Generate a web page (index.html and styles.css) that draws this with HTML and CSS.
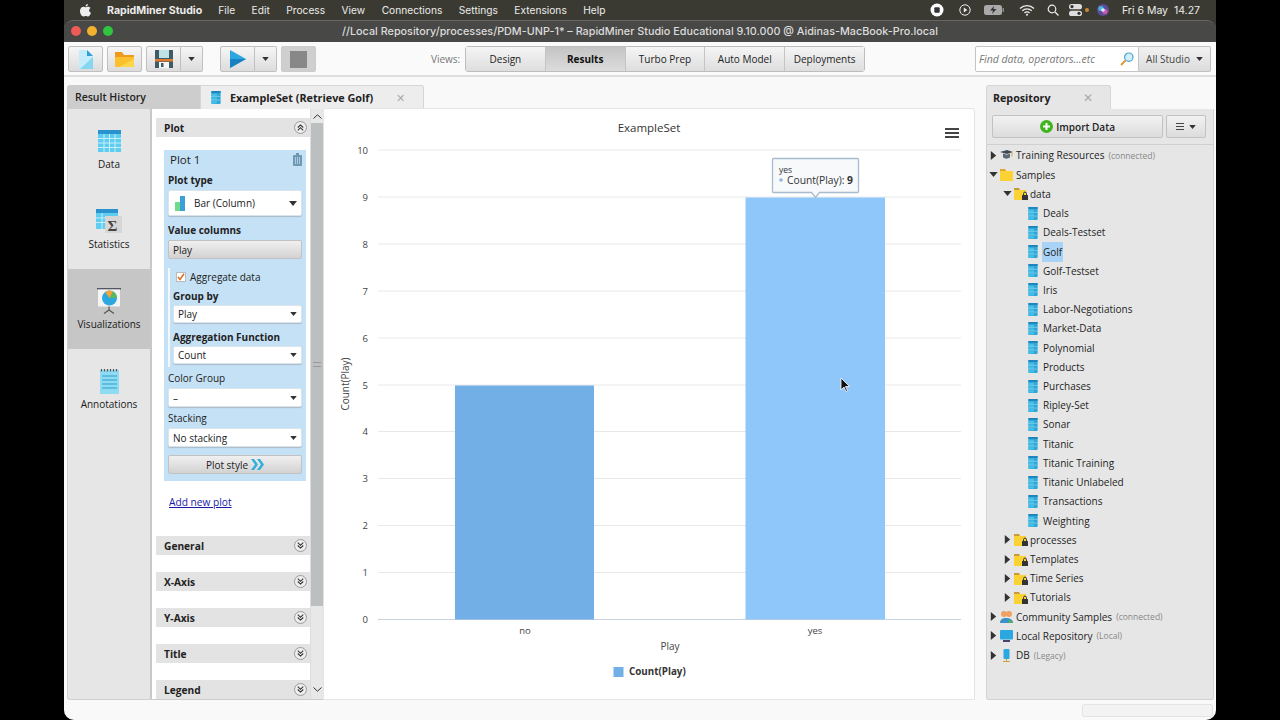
FILE: index.html
```html
<!DOCTYPE html>
<html lang="en">
<head>
<meta charset="utf-8">
<title>RapidMiner Studio</title>
<link rel="stylesheet" href="styles.css">
</head>
<body>
<svg class="defs" width="0" height="0" aria-hidden="true">
  <symbol id="db" viewBox="0 0 10 14">
    <rect x="0" y="0" width="10" height="14" rx="1" fill="#2fa6d8"/>
    <rect x="0" y="0" width="10" height="2" fill="#1f84bb"/>
    <rect x="0" y="3" width="6" height="2.500" fill="#45c0e8"/>
    <rect x="0" y="7" width="6" height="2.500" fill="#45c0e8"/>
    <rect x="0" y="11" width="6" height="2.500" fill="#45c0e8"/>
    <path d="M0 5.800h10M0 9.800h10" stroke="#a8e2f2" stroke-width=".6"/>
  </symbol>
  <symbol id="folder" viewBox="0 0 13 13">
    <path d="M0 1h5l1 2h7v10H0z" fill="#fbd233"/>
    <path d="M0 1h5l1 2H0z" fill="#e5a526"/>
  </symbol>
  <symbol id="flock" viewBox="0 0 14 13">
    <path d="M0 1h5l1 2h6v10H0z" fill="#fbd233"/>
    <path d="M0 1h5l1 2H0z" fill="#c99a3a"/>
    <rect x="8" y="8" width="6" height="5" rx=".5" fill="#333"/>
    <path d="M9.5 8V6.6a1.5 1.5 0 0 1 3 0V8" fill="none" stroke="#333" stroke-width="1"/>
  </symbol>
  <symbol id="arr-r" viewBox="0 0 6 10"><path d="M0 0l6 5-6 5z" fill="#333"/></symbol>
  <symbol id="arr-d" viewBox="0 0 10 6"><path d="M0 0h10L5 6z" fill="#333"/></symbol>
  <symbol id="dbl-up" viewBox="0 0 13 13"><circle cx="6.500" cy="6.500" r="6" fill="#eee" stroke="#888" stroke-width=".8"/><path d="M3.800 6.500L6.500 3.900l2.700 2.600M3.800 9.300l2.700-2.600 2.700 2.600" fill="none" stroke="#333" stroke-width="1.100"/></symbol>
  <symbol id="dbl-down" viewBox="0 0 13 13"><circle cx="6.500" cy="6.500" r="6" fill="#eee" stroke="#888" stroke-width=".8"/><path d="M3.800 3.700l2.700 2.600 2.700-2.600M3.800 6.500l2.700 2.600 2.700-2.600" fill="none" stroke="#333" stroke-width="1.100"/></symbol>
</svg>
<div class="window">
  <header class="menubar">
    <svg class="apple" width="11" height="13" viewBox="0 0 11 13"><path d="M8 0c.1 1-.9 2.700-2.500 2.600C5.400 1.300 6.600.1 8 0zM5.500 3.300c.6 0 1.400-.6 2.500-.6 1 0 2 .5 2.500 1.300-2 1.200-1.700 3.900.5 4.800-.5 1.500-1.700 3.800-3 3.800-.8 0-1.200-.5-2.200-.5s-1.500.5-2.200.5C1.700 12.600 0 9.600 0 7.100 0 4.400 1.700 2.800 3.300 2.800c.9 0 1.700.5 2.200.5z" fill="#eee"/></svg>
    <strong class="appname">RapidMiner Studio</strong>
    <nav class="menus"><span>File</span><span>Edit</span><span>Process</span><span>View</span><span>Connections</span><span>Settings</span><span>Extensions</span><span>Help</span></nav>
    <div class="status-icons">
      <svg width="14" height="14" viewBox="0 0 14 14"><circle cx="7" cy="7" r="6.500" fill="#fff"/><rect x="4.300" y="4.300" width="5.400" height="5.400" rx="1" fill="#333"/></svg>
      <svg class="s1" width="12" height="12" viewBox="0 0 12 12"><circle cx="6" cy="6" r="5.200" fill="none" stroke="#eee" stroke-width="1"/><path d="M4.800 3.600L8.300 6 4.800 8.400z" fill="#eee"/></svg>
      <svg class="s2" width="20" height="10" viewBox="0 0 20 10"><rect x="0" y="0" width="18" height="10" rx="2.500" fill="#aaa"/><path d="M10 1L6 5.500h3L8 9l4.500-5H9.500z" fill="#333"/><rect x="18.500" y="3" width="1.500" height="4" fill="#888"/></svg>
      <svg class="s3" width="16" height="12" viewBox="0 0 16 12"><path d="M1 4.500a10 10 0 0 1 14 0M3.300 6.800a6.700 6.700 0 0 1 9.400 0M5.500 9a3.500 3.500 0 0 1 5 0" fill="none" stroke="#eee" stroke-width="1.300"/><circle cx="8" cy="10.800" r="1" fill="#eee"/></svg>
      <svg class="s4" width="12" height="12" viewBox="0 0 12 12"><circle cx="5" cy="5" r="3.800" fill="none" stroke="#eee" stroke-width="1.200"/><path d="M8 8l3.500 3.500" stroke="#eee" stroke-width="1.300"/></svg>
      <svg class="s5" width="13" height="12" viewBox="0 0 13 12"><rect x="0" y="0" width="13" height="5.300" rx="2.600" fill="#ddd"/><rect x="0" y="6.700" width="13" height="5.300" rx="2.600" fill="#ddd"/><circle cx="3" cy="2.600" r="1.600" fill="#333"/><circle cx="10" cy="9.300" r="1.600" fill="#333"/></svg>
      <i class="dot"></i>
      <svg class="s6" width="12" height="12" viewBox="0 0 12 12"><circle cx="6" cy="6" r="6" fill="#5b4b9c"/><circle cx="4" cy="4.500" r="2.600" fill="#49b6d8"/><circle cx="8" cy="7.500" r="2.600" fill="#c75aa8"/><circle cx="6" cy="6" r="1.800" fill="#dfe8f5"/></svg>
    </div>
    <span class="clock">Fri 6 May&nbsp; 14.27</span>
  </header>

  <div class="titlebar">
    <div class="lights"><i class="red"></i><i class="yellow"></i><i class="green"></i></div>
    <span class="wintitle">//Local Repository/processes/PDM-UNP-1* – RapidMiner Studio Educational 9.10.000 @ Aidinas-MacBook-Pro.local</span>
  </div>

  <div class="toolbar">
    <button class="tb"><svg width="14" height="19" viewBox="0 0 14 19"><path d="M0 0h8l6 6v13H0z" fill="#c4ecfa"/><path d="M8 0l6 6H8z" fill="#2f9fd6"/><path d="M14 7v12H1z" fill="#86d6f2"/></svg></button>
    <button class="tb"><svg width="19" height="15" viewBox="0 0 19 15"><path d="M0 0h7l2 3h10v12H0z" fill="#ee9a1c"/><path d="M0 5h19v10H0z" fill="#fbc02d"/><path d="M19 7v8H4z" fill="#fdd64a"/></svg></button>
    <div class="split save">
      <button class="tb"><svg width="18" height="18" viewBox="0 0 18 18"><rect width="18" height="18" fill="#3f5b68"/><rect x="4" y="0" width="10" height="8" fill="#bfe2e6"/><rect x="0" y="9" width="18" height="2.500" fill="#e07b32"/><rect x="4" y="12" width="10" height="6" fill="#f6f6f6"/><rect x="6" y="13" width="2.500" height="4" fill="#3f5b68"/></svg></button>
      <button class="tb caret"><svg width="7" height="4" viewBox="0 0 10 6"><use href="#arr-d"/></svg></button>
    </div>
    <div class="split run">
      <button class="tb"><svg width="16" height="18" viewBox="0 0 16 18"><path d="M0 0l16 9L0 18z" fill="#2aa7e0"/><path d="M0 9h16L0 18z" fill="#1980c2"/></svg></button>
      <button class="tb caret"><svg width="7" height="4" viewBox="0 0 10 6"><use href="#arr-d"/></svg></button>
    </div>
    <button class="tb stop"><span class="stopsq"></span></button>
    <span class="views-label">Views:</span>
    <div class="views">
      <button>Design</button><button class="on">Results</button><button>Turbo Prep</button><button>Auto Model</button><button>Deployments</button>
    </div>
    <div class="search">
      <span class="search-ph">Find data, operators...etc</span>
      <svg width="14" height="14" viewBox="0 0 14 14"><circle cx="8.800" cy="5.200" r="4.200" fill="#d3eefa" stroke="#4aa5cc" stroke-width="1.200"/><path d="M5.600 8.400L1 13" stroke="#d99a32" stroke-width="2"/></svg>
    </div>
    <button class="allstudio">All Studio <svg width="7" height="4" viewBox="0 0 10 6"><use href="#arr-d"/></svg></button>
  </div>

  <main class="main">
    <section class="left">
      <div class="tabs">
        <div class="tab-hist">Result History</div>
        <div class="tab-active">
          <svg width="10" height="13"><use href="#db"/></svg>
          <span>ExampleSet (Retrieve Golf)</span>
          <b class="x">✕</b>
        </div>
      </div>
      <div class="leftbody">
        <aside class="sidetabs">
          <div class="stab">
            <div class="stab-ico"><svg width="23" height="22" viewBox="0 0 23 22"><rect width="23" height="22" fill="#5fcdf0"/><rect width="23" height="4" fill="#2a92cc"/><path d="M0 8.500h23M0 13h23M0 17.500h23M6 4v18M11.500 4v18M17 4v18" stroke="#c5effa" stroke-width="1"/></svg></div>
            <span>Data</span>
          </div>
          <div class="stab">
            <div class="stab-ico"><svg width="26" height="24" viewBox="0 0 26 24"><rect width="22" height="20" fill="#5fcdf0"/><rect width="22" height="4" fill="#2a92cc"/><path d="M0 9h22M0 13.500h22M6 4v16" stroke="#c5effa"/><rect x="9" y="7" width="17" height="17" fill="#d6d6d6"/><text x="11.500" y="22" class="sigma">Σ</text></svg></div>
            <span>Statistics</span>
          </div>
          <div class="stab on">
            <div class="stab-ico"><svg width="24" height="26" viewBox="0 0 24 26"><rect x="0" y="0" width="24" height="1.500" fill="#556"/><rect x="1" y="1.500" width="22" height="17" fill="#f4f4f4"/><circle cx="12.500" cy="10" r="7.500" fill="#2da7df"/><path d="M12.500 10L16 3.400a7.500 7.500 0 0 1 4 6.600z" fill="#5cb85c"/><path d="M12.500 10L8 4a7.500 7.500 0 0 1 8-.6z" fill="#f0a63a"/><path d="M12 18.500v3.500M12 22l-5 3.500M12 22l5 3.500" stroke="#555" stroke-width="1.200" fill="none"/></svg></div>
            <span>Visualizations</span>
          </div>
          <div class="stab">
            <div class="stab-ico"><svg width="19" height="26" viewBox="0 0 19 26"><rect y="2" width="19" height="24" fill="#8fdcf2"/><path d="M1.500 1v2.500M4.500 1v2.500M7.500 1v2.500M10.500 1v2.500M13.500 1v2.500M16.500 1v2.500" stroke="#555" stroke-width="1.200"/><path d="M2 8h15M2 12h15M2 16h15M2 20h15" stroke="#2a9fcc"/></svg></div>
            <span>Annotations</span>
          </div>
        </aside>
        <div class="config">
          <div class="acc acc-first"><span>Plot</span><svg width="13" height="13"><use href="#dbl-up"/></svg></div>
          <div class="card">
            <div class="card-head"><span>Plot 1</span><svg width="9" height="13" viewBox="0 0 9 13"><rect x="0" y="2" width="9" height="11" rx="1" fill="#6d9ab0"/><rect x="3" y="0" width="3" height="2" fill="#6d9ab0"/><path d="M2.500 4v7M4.500 4v7M6.500 4v7" stroke="#c5e1f5" stroke-width=".7"/></svg></div>
            <label class="lbl b lbl-type">Plot type</label>
            <div class="sel sel-big">
              <svg width="10" height="15" viewBox="0 0 10 15"><rect x="0" y="6" width="5" height="9" fill="#6fdc8c"/><rect x="5" y="0" width="5" height="15" fill="#3d9fd8"/></svg>
              <span>Bar (Column)</span><svg class="ar" width="8" height="5" viewBox="0 0 10 6"><use href="#arr-d"/></svg>
            </div>
            <label class="lbl b lbl-val">Value columns</label>
            <div class="greybtn left-text">Play</div>
            <div class="aggr">
              <div class="check"><span class="box"><svg width="8" height="8" viewBox="0 0 8 8"><path d="M1 4l2 2.500L7 .8" fill="none" stroke="#d8702a" stroke-width="1.600"/></svg></span><span>Aggregate data</span></div>
              <label class="lbl b lbl-group">Group by</label>
              <div class="sel sel-sm"><span>Play</span><svg class="ar" width="7" height="4" viewBox="0 0 10 6"><use href="#arr-d"/></svg></div>
              <label class="lbl b lbl-fn">Aggregation Function</label>
              <div class="sel sel-sm"><span>Count</span><svg class="ar" width="7" height="4" viewBox="0 0 10 6"><use href="#arr-d"/></svg></div>
            </div>
            <label class="lbl lbl-color">Color Group</label>
            <div class="sel sel-mid"><span>–</span><svg class="ar" width="7" height="4" viewBox="0 0 10 6"><use href="#arr-d"/></svg></div>
            <label class="lbl lbl-stack">Stacking</label>
            <div class="sel sel-mid"><span>No stacking</span><svg class="ar" width="7" height="4" viewBox="0 0 10 6"><use href="#arr-d"/></svg></div>
            <div class="greybtn style-btn">Plot style <svg width="13" height="11" viewBox="0 0 13 11"><path d="M0 0h3l4 5.500L3 11H0l4-5.500zM6 0h3l4 5.500L9 11H6l4-5.500z" fill="#2fb0dc"/></svg></div>
          </div>
          <a class="addplot">Add new plot</a>
          <div class="acc acc-general"><span>General</span><svg width="13" height="13"><use href="#dbl-down"/></svg></div>
          <div class="acc"><span>X-Axis</span><svg width="13" height="13"><use href="#dbl-down"/></svg></div>
          <div class="acc"><span>Y-Axis</span><svg width="13" height="13"><use href="#dbl-down"/></svg></div>
          <div class="acc"><span>Title</span><svg width="13" height="13"><use href="#dbl-down"/></svg></div>
          <div class="acc"><span>Legend</span><svg width="13" height="13"><use href="#dbl-down"/></svg></div>
        </div>
        <div class="vscroll">
          <svg class="up" width="9" height="5" viewBox="0 0 9 5"><path d="M.5 4.500L4.500.8l4 3.700" fill="none" stroke="#333"/></svg>
          <div class="thumb"><i></i></div>
          <svg class="down" width="9" height="5" viewBox="0 0 9 5"><path d="M.5.500l4 3.700 4-3.700" fill="none" stroke="#333"/></svg>
        </div>
        <div class="chart">
          <svg class="plot" width="652" height="592" viewBox="323 108 652 592">
            <text x="649" y="132" text-anchor="middle" class="c-title">ExampleSet</text>
            <path d="M945 129h14M945 133h14M945 137h14" stroke="#444" stroke-width="2"/>
            <path class="grid" d="M378 150h583M378 197h583M378 244h583M378 291h583M378 338h583M378 385h583M378 431.500h583M378 478.500h583M378 525.500h583M378 572.500h583"/>
            <path d="M378 619.500h583" stroke="#c8d2e0"/>
            <g class="c-num" text-anchor="end">
              <text x="368" y="154">10</text><text x="368" y="201">9</text><text x="368" y="248">8</text><text x="368" y="295">7</text><text x="368" y="342">6</text><text x="368" y="389">5</text><text x="368" y="435">4</text><text x="368" y="482">3</text><text x="368" y="529">2</text><text x="368" y="576">1</text><text x="368" y="623">0</text>
            </g>
            <rect x="455" y="385.500" width="139" height="234" fill="#72afe6"/>
            <rect x="745.500" y="197.500" width="139.500" height="422" fill="#90c7fb"/>
            <text x="525" y="634" text-anchor="middle" class="c-num">no</text>
            <text x="815" y="634" text-anchor="middle" class="c-num">yes</text>
            <text x="670" y="650" text-anchor="middle" class="c-axis">Play</text>
            <text transform="translate(349 384) rotate(-90)" text-anchor="middle" class="c-axis">Count(Play)</text>
            <rect x="613.500" y="667" width="10" height="10" fill="#72afe6"/>
            <text x="629" y="675" class="c-legend">Count(Play)</text>
            <path d="M773.500 158.500h84a1 1 0 0 1 1 1v32a1 1 0 0 1-1 1h-38l-4 5-4-5h-38a1 1 0 0 1-1-1v-32a1 1 0 0 1 1-1z" fill="#f7f9fb" stroke="#a9bccf" stroke-width="1.300"/>
            <text x="779" y="172.500" class="tip-s">yes</text>
            <circle cx="781" cy="180" r="1.800" fill="#8db4e2"/>
            <text x="787" y="183.500" class="tip">Count(Play): <tspan class="tip-b">9</tspan></text>
            <path d="M841 378v12l3-3 2 4.500 1.500-.7-2-4.300h4z" fill="#111" stroke="#fff" stroke-width=".8"/>
          </svg>
        </div>
      </div>
    </section>

    <aside class="right">
      <div class="rtab"><span>Repository</span><b class="x">✕</b></div>
      <div class="rbody">
        <div class="rtools">
          <button class="import"><svg width="13" height="13" viewBox="0 0 13 13"><circle cx="6.500" cy="6.500" r="6.500" fill="#3fb41e"/><path d="M6.500 3v7M3 6.500h7" stroke="#fff" stroke-width="2"/></svg>Import Data</button>
          <button class="rmenu"><svg width="8" height="7" viewBox="0 0 8 7"><path d="M0 .5h8M0 3.500h8M0 6.500h8" stroke="#444"/></svg><svg width="7" height="4" viewBox="0 0 10 6"><use href="#arr-d"/></svg></button>
        </div>
        <ul class="tree">
          <li class="l0"><svg class="a" width="5" height="9"><use href="#arr-r"/></svg><svg class="ic" width="13" height="10" viewBox="0 0 13 10"><path d="M0 2l7-2 6 2-6 2z" fill="#3e4a55"/><path d="M3 3.500v4c2 1.500 5 1.500 7 0v-4l-3 1.200z" fill="#5b6a78"/><path d="M12 2.500v4" stroke="#d9a93a"/></svg><span>Training Resources</span> <small>(connected)</small></li>
          <li class="l0"><svg class="a" width="9" height="5"><use href="#arr-d"/></svg><svg class="ic" width="13" height="13"><use href="#folder"/></svg><span>Samples</span></li>
          <li class="l1"><svg class="a" width="9" height="5"><use href="#arr-d"/></svg><svg class="ic" width="14" height="13"><use href="#flock"/></svg><span>data</span></li>
          <li class="l2"><svg width="10" height="13"><use href="#db"/></svg><span>Deals</span></li>
          <li class="l2"><svg width="10" height="13"><use href="#db"/></svg><span>Deals-Testset</span></li>
          <li class="l2 sel-row"><svg width="10" height="13"><use href="#db"/></svg><span>Golf</span></li>
          <li class="l2"><svg width="10" height="13"><use href="#db"/></svg><span>Golf-Testset</span></li>
          <li class="l2"><svg width="10" height="13"><use href="#db"/></svg><span>Iris</span></li>
          <li class="l2"><svg width="10" height="13"><use href="#db"/></svg><span>Labor-Negotiations</span></li>
          <li class="l2"><svg width="10" height="13"><use href="#db"/></svg><span>Market-Data</span></li>
          <li class="l2"><svg width="10" height="13"><use href="#db"/></svg><span>Polynomial</span></li>
          <li class="l2"><svg width="10" height="13"><use href="#db"/></svg><span>Products</span></li>
          <li class="l2"><svg width="10" height="13"><use href="#db"/></svg><span>Purchases</span></li>
          <li class="l2"><svg width="10" height="13"><use href="#db"/></svg><span>Ripley-Set</span></li>
          <li class="l2"><svg width="10" height="13"><use href="#db"/></svg><span>Sonar</span></li>
          <li class="l2"><svg width="10" height="13"><use href="#db"/></svg><span>Titanic</span></li>
          <li class="l2"><svg width="10" height="13"><use href="#db"/></svg><span>Titanic Training</span></li>
          <li class="l2"><svg width="10" height="13"><use href="#db"/></svg><span>Titanic Unlabeled</span></li>
          <li class="l2"><svg width="10" height="13"><use href="#db"/></svg><span>Transactions</span></li>
          <li class="l2"><svg width="10" height="13"><use href="#db"/></svg><span>Weighting</span></li>
          <li class="l1"><svg class="a" width="5" height="9"><use href="#arr-r"/></svg><svg class="ic" width="14" height="13"><use href="#flock"/></svg><span>processes</span></li>
          <li class="l1"><svg class="a" width="5" height="9"><use href="#arr-r"/></svg><svg class="ic" width="14" height="13"><use href="#flock"/></svg><span>Templates</span></li>
          <li class="l1"><svg class="a" width="5" height="9"><use href="#arr-r"/></svg><svg class="ic" width="14" height="13"><use href="#flock"/></svg><span>Time Series</span></li>
          <li class="l1"><svg class="a" width="5" height="9"><use href="#arr-r"/></svg><svg class="ic" width="14" height="13"><use href="#flock"/></svg><span>Tutorials</span></li>
          <li class="l0"><svg class="a" width="5" height="9"><use href="#arr-r"/></svg><svg class="ic" width="13" height="12" viewBox="0 0 13 12"><circle cx="4" cy="3" r="3" fill="#f0a060"/><circle cx="9" cy="3" r="3" fill="#f0a060"/><path d="M0 12c0-4 3-5 6-5s7 1 7 5z" fill="#3d8fc8"/><path d="M8 12c0-2 1-3 2-3s3 1 3 3z" fill="#4cae6a"/></svg><span>Community Samples</span> <small>(connected)</small></li>
          <li class="l0"><svg class="a" width="5" height="9"><use href="#arr-r"/></svg><svg class="ic" width="13" height="12" viewBox="0 0 13 12"><rect width="13" height="9.500" rx="1" fill="#2ba8e0"/><rect x="3" y="10" width="7" height="2" fill="#446"/></svg><span>Local Repository</span> <small>(Local)</small></li>
          <li class="l0"><svg class="a" width="5" height="9"><use href="#arr-r"/></svg><svg class="ic" width="13" height="13" viewBox="0 0 13 13"><rect x="3.500" y="0" width="6" height="10" rx="1" fill="#2ba8e0"/><path d="M6.500 10v2M3 12.500h7" stroke="#c9a33c"/></svg><span>DB</span> <small>(Legacy)</small></li>
        </ul>
      </div>
    </aside>
  </main>
  <footer class="statusbar"><div class="progress"></div></footer>
</div>
</body>
</html>
```

FILE: styles.css
```css
* { box-sizing: border-box; }
html, body { margin: 0; padding: 0; width: 1280px; height: 720px; overflow: hidden; background: #000; }
body { font-family: "Open Sans", "Liberation Sans", sans-serif; font-size: 10px; color: #222; }
.defs { position: absolute; }
button { font: inherit; color: inherit; margin: 0; padding: 0; }
ul { list-style: none; margin: 0; padding: 0; }

.window { width: 1152px; height: 720px; margin-left: 64px; display: flex; flex-direction: column; background: #3b3a32; border-radius: 0 0 10px 10px; overflow: hidden; }

.menubar { height: 20px; flex: none; display: flex; align-items: center; background: #3b3a32; color: #ececec; font-family: Inter, "Liberation Sans", sans-serif; font-size: 10.2px; padding-left: 16px; padding-right: 16px; }
.apple { flex: none; }
.appname { margin-left: 16px; font-weight: 700; font-size: 10.6px; }
.menus { display: flex; gap: 16.500px; margin-left: 16px; }
.status-icons { margin-left: auto; display: flex; align-items: center; }
.s1 { margin-left: 15px; } .s2 { margin-left: 13px; } .s3 { margin-left: 15px; } .s4 { margin-left: 12px; } .s5 { margin-left: 10px; }
.dot { width: 4px; height: 4px; border-radius: 50%; background: #c98a3a; margin-left: 3px; }
.s6 { margin-left: 8px; }
.clock { margin-left: 13px; white-space: nowrap; font-size: 10.5px; }

.titlebar { height: 22px; flex: none; background: #484846; border-radius: 9px 9px 0 0; display: flex; align-items: center; justify-content: center; position: relative; border-top: 1px solid #666; }
.lights { position: absolute; left: 7px; top: 5px; display: flex; gap: 6px; }
.lights i { width: 10px; height: 10px; border-radius: 50%; }
.red { background: #ee5a56; } .yellow { background: #f4b12e; } .green { background: #2fc53f; }
.wintitle { color: #dcdcdc; font-family: Inter, "Liberation Sans", sans-serif; font-weight: 500; font-size: 10.8px; white-space: nowrap; }

.toolbar { height: 35px; flex: none; background: #fafafa; border-bottom: 2px solid #dedede; display: flex; align-items: center; padding-left: 4px; padding-top: 1px; }
.tb { width: 35px; height: 26px; border: 1px solid #c0c0c0; border-radius: 2px; background: linear-gradient(#f6f6f6, #dcdcdc); display: flex; align-items: center; justify-content: center; }
.toolbar > .tb + .tb { margin-left: 4px; }
.split { display: flex; }
.split .tb { border-radius: 2px 0 0 2px; }
.split .caret { width: 22px; border-left: 0; border-radius: 0 2px 2px 0; }
.save { margin-left: 4px; }
.run { margin-left: 17px; }
.stop { margin-left: 4px; background: #cfcfcf; border-color: #ccc; }
.stopsq { width: 17px; height: 17px; background: #888; }
.views-label { margin-left: 115px; color: #777; width: 34px; }
.views { display: flex; border: 1px solid #bdbdbd; border-radius: 3px; height: 26px; width: 400px; }
.views button { flex: 1; border: 0; border-right: 1px solid #c4c4c4; background: linear-gradient(#f5f5f5, #dedede); font-size: 10px; font-weight: 500; color: #222; }
.views button:last-child { border-right: 0; }
.views .on { background: linear-gradient(#c4c4c4, #dcdcdc); font-weight: 700; color: #111; }
.search { margin-left: 110px; width: 164px; height: 26px; background: #fff; border: 1px solid #c4c4c4; border-radius: 2px 0 0 2px; display: flex; align-items: center; justify-content: space-between; padding: 0 4px 0 3px; }
.search-ph { font-style: italic; color: #777; font-size: 10.5px; }
.allstudio { width: 72px; height: 26px; border: 1px solid #c0c0c0; border-left: 0; border-radius: 0 2px 2px 0; background: linear-gradient(#f2f2f2, #dcdcdc); display: flex; align-items: center; justify-content: center; gap: 6px; font-size: 10px; color: #444; }

.main { flex: 1; min-height: 0; display: flex; background: #f9f9f9; padding: 8px 2px 0 3px; }
.left { width: 909px; flex: none; display: flex; flex-direction: column; }
.tabs { height: 24px; flex: none; display: flex; }
.tab-hist { width: 133px; background: #cdcdcd; border-radius: 3px 0 0 0; display: flex; align-items: center; padding-left: 8px; font-weight: 600; font-size: 10.5px; }
.tab-active { width: 224px; background: #ededed; border: 1px solid #d6d6d6; border-bottom: 0; border-radius: 0 3px 0 0; display: flex; align-items: center; padding-left: 10px; font-weight: 700; font-size: 10.8px; }
.tab-active span { margin-left: 9px; }
.x { color: #aaa; font-weight: 400; font-size: 11px; margin-left: 23px; }
.leftbody { flex: 1; min-height: 0; display: flex; }

.sidetabs { width: 85px; flex: none; background: #e6e6e6; border: 1px solid #d0d0d0; border-top: 0; border-radius: 0 0 0 3px; border-right: 2px solid #c8c8c8; }
.stab { height: 80px; display: flex; flex-direction: column; align-items: center; padding-top: 19px; gap: 3px; font-size: 10px; font-weight: 500; color: #1a1a1a; }
.stab-ico { height: 26px; display: flex; align-items: center; justify-content: center; flex: none; }
.stab.on { background: #c6c6c6; }
.sigma { font: 700 15px "Liberation Serif", serif; fill: #444; }

.config { width: 158px; flex: none; background: #fff; overflow: hidden; padding: 9px 0 0 4px; display: flex; flex-direction: column; border-bottom: 1px solid #ccc; }
.acc { flex: none; height: 19px; background: #e3e3e3; display: flex; align-items: center; justify-content: space-between; padding: 0 3px 0 8px; font-weight: 700; margin-top: 17px; font-size: 10.2px; }
.acc-first { margin-top: 0; }
.acc-general { margin-top: 0; }
.card { flex: none; margin: 13px 4px 0 8px; height: 331px; background: #c5e1f5; padding: 3px 4px 0 4px; display: flex; flex-direction: column; }
.card-head { display: flex; justify-content: space-between; align-items: center; height: 13px; font-size: 11.5px; padding: 0 0 0 2px; color: #222; margin-top: 0; }
.lbl { display: block; height: 14px; line-height: 14px; color: #222; }
.b { font-weight: 700; }
.lbl-type { margin-top: 7px; }
.sel { background: #fff; border: 1px solid #dbe4ea; border-radius: 2px; display: flex; align-items: center; padding: 0 4px; box-shadow: 0 1px 1px #aabbc8; flex: none; }
.sel .ar { margin-left: auto; }
.sel-big { height: 26px; margin-top: 3px; padding-left: 6px; gap: 9px; }
.lbl-val { margin-top: 7px; }
.greybtn { height: 19px; margin-top: 3px; border: 1px solid #c2c2c2; border-radius: 2px; background: linear-gradient(#f0f0f0, #d2d2d2); display: flex; align-items: center; flex: none; }
.left-text { padding-left: 4px; }
.aggr { margin-top: 9px; height: 99px; border-left: 2px solid #f2f8fc; padding-left: 3px; flex: none; }
.check { display: flex; align-items: center; gap: 4px; height: 18px; padding-left: 3px; }
.box { width: 10px; height: 10px; background: #fff; border: 1px solid #bbb; display: flex; align-items: center; justify-content: center; }
.lbl-group { margin-top: 3px; }
.aggr .sel-sm { height: 18px; margin-top: 2px; }
.lbl-fn { margin-top: 7px; }
.lbl-color { margin-top: 4px; }
.sel-mid { height: 19px; margin-top: 3px; }
.lbl-stack { margin-top: 4px; }
.style-btn { margin-top: 8px; justify-content: center; gap: 3px; }
.addplot { flex: none; margin: 14px 0 0 13px; line-height: 14px; color: #1a1aa6; text-decoration: underline; height: 41px; font-size: 10.2px; }

.vscroll { width: 13px; flex: none; background: #e8e8e8; display: flex; flex-direction: column; align-items: center; border-bottom: 1px solid #ccc; border-left: 1px solid #ddd; }
.vscroll .up { margin: 5px 0 4px; flex: none; }
.thumb { width: 13px; height: 483px; background: #bcbfbf; flex: none; display: flex; align-items: center; justify-content: center; }
.thumb i { width: 8px; height: 5px; border-top: 1px solid #999; border-bottom: 1px solid #999; }
.vscroll .down { margin-top: 81px; flex: none; }

.chart { width: 652px; flex: none; margin-top: -1px; background: #fff; border: 1px solid #e4e4e4; border-radius: 0 3px 0 0; overflow: hidden; }
.plot { display: block; margin: -1px; }
.grid { stroke: #e8e8e8; fill: none; }
.c-title { font-size: 11.5px; fill: #333; }
.c-num { font-size: 9.500px; fill: #444; }
.c-axis { font-size: 10px; fill: #444; }
.c-legend { font-size: 9.800px; font-weight: 700; fill: #333; }
.tip-s { font-size: 8.500px; fill: #333; }
.tip { font-size: 10.300px; fill: #333; }
.tip-b { font-weight: 700; }

.right { width: 228px; flex: none; margin-left: 10px; display: flex; flex-direction: column; }
.rtab { height: 24px; width: 125px; flex: none; background: #e6e6e6; border: 1px solid #d6d6d6; border-bottom: 0; border-radius: 3px 3px 0 0; display: flex; align-items: center; padding-left: 6px; font-weight: 700; font-size: 10.7px; }
.rtab .x { margin-left: 32px; font-size: 12px; }
.rbody { flex: 1; min-height: 0; background: #e6e6e6; border: 1px solid #d2d2d2; border-top: 0; border-radius: 0 0 3px 3px; padding: 6px 0 0 0; }
.rtools { display: flex; padding: 0 7px 0 5px; gap: 3px; height: 30px; border-bottom: 1px solid #d0d0d0; }
.rtools button { height: 23px; border: 1px solid #c2c2c2; border-radius: 2px; background: linear-gradient(#f2f2f2, #dcdcdc); display: flex; align-items: center; justify-content: center; }
.import { width: 172px; gap: 3px; font-weight: 600; font-size: 10px; }
.rmenu { width: 40px; gap: 5px; }
.tree { padding-top: .8px; }
.tree li { height: 19.220px; display: flex; align-items: center; white-space: nowrap; color: #1e1e1e; font-size: 10px; }
.tree small { font-size: 8.500px; color: #888; margin-left: 4px; }
.tree .a { flex: none; width: 9px; }
.tree .ic { flex: none; margin-right: 3px; }
.l0 { padding-left: 2px; }
.l0 .a { margin-right: 2px; }
.l1 { padding-left: 16px; }
.l1 .a { margin-right: 2px; }
.l1 .ic { margin-right: 2px; }
.l2 { padding-left: 41px; gap: 5px; }
.sel-row span { background: #a9d3f6; padding: 3px 1px; margin-left: -1px; }
.statusbar { height: 20px; flex: none; background: #f9f9f9; display: flex; justify-content: flex-end; align-items: center; padding-right: 3px; }
.progress { width: 131px; height: 13px; background: #f3f3f3; border: 1px solid #e4e4e4; border-radius: 2px; }
```
